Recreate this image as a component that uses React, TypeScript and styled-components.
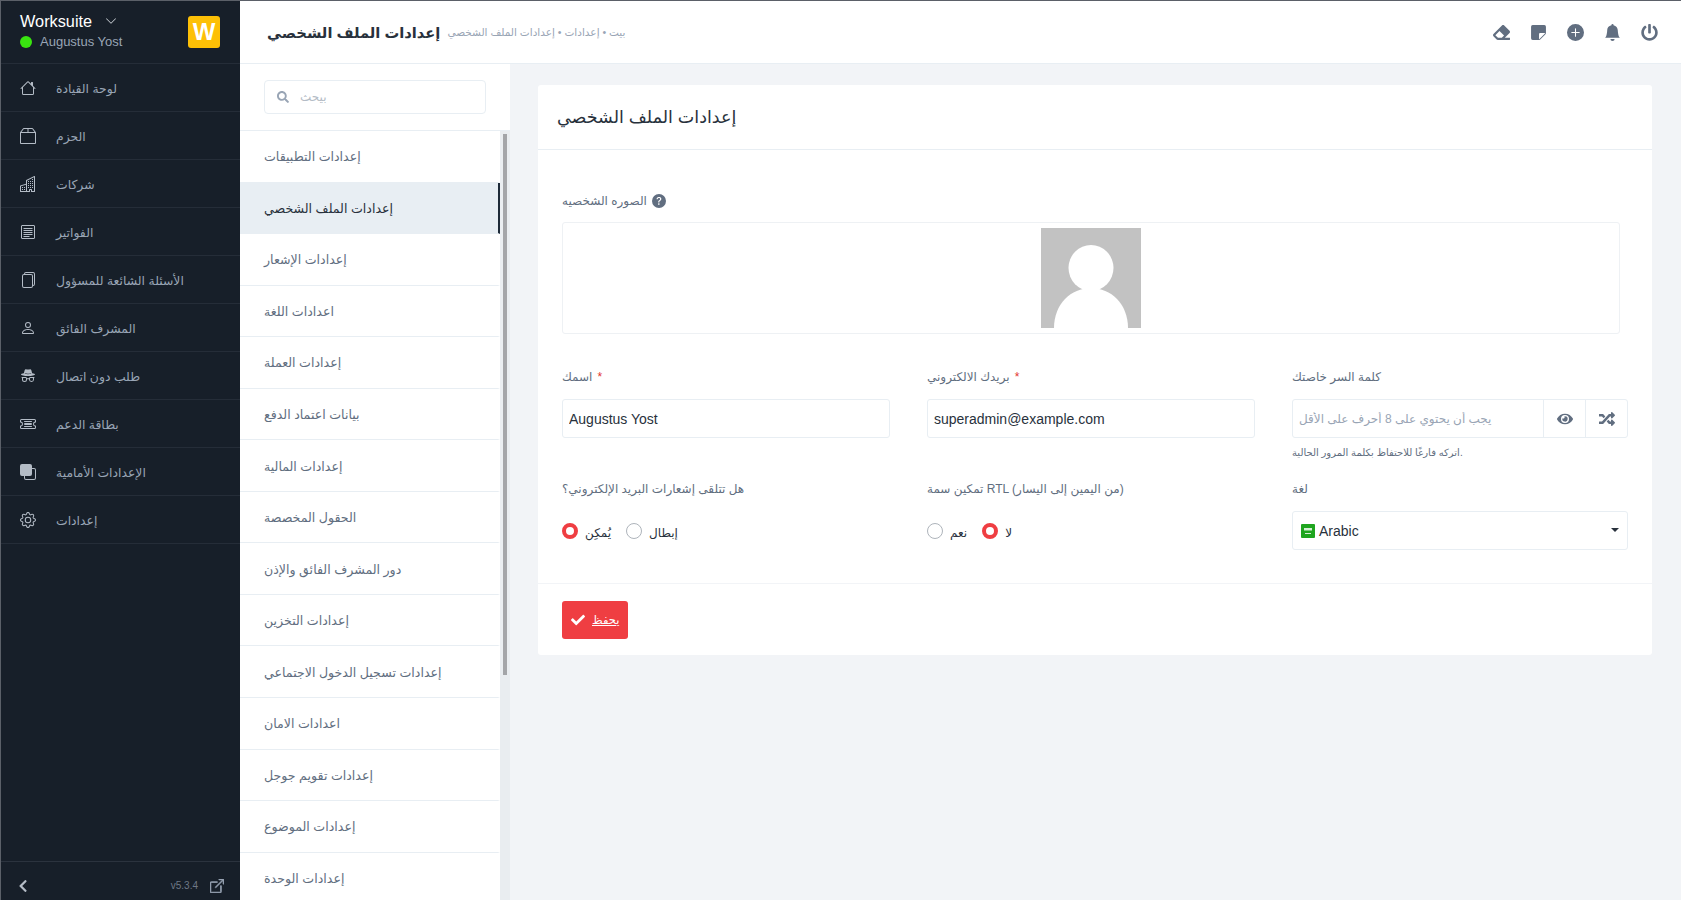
import React from "react";
import styled, { createGlobalStyle } from "styled-components";
import {
	BsBellFill,
	BsBox2,
	BsBoxArrowUpRight,
	BsBuildings,
	BsChevronDown,
	BsFiles,
	BsFront,
	BsGear,
	BsHouse,
	BsIncognito,
	BsPerson,
	BsPlusCircleFill,
	BsQuestionCircleFill,
	BsStickyFill,
	BsTicketDetailed,
} from "react-icons/bs";
import { FaCheck, FaChevronLeft, FaEraser, FaEye, FaPowerOff, FaRandom, FaSearch } from "react-icons/fa";

const InvoiceIcon: React.FC = () => (
	<svg width="16" height="16" viewBox="0 0 16 16" fill="none" stroke="currentColor" strokeWidth="1">
		<rect x="1.5" y="1.5" width="13" height="13" rx="0.5" />
		<path d="M3.5 4.5h9M3.5 6.5h9M3.5 8.5h9M3.5 10.5h9M3.5 12.5h6" />
	</svg>
);

const menuItems = [
	{ label: "لوحة القيادة", icon: <BsHouse /> },
	{ label: "الحزم", icon: <BsBox2 /> },
	{ label: "شركات", icon: <BsBuildings /> },
	{ label: "الفواتير", icon: <InvoiceIcon /> },
	{ label: "الأسئلة الشائعة للمسؤول", icon: <BsFiles /> },
	{ label: "المشرف الفائق", icon: <BsPerson /> },
	{ label: "طلب دون اتصال", icon: <BsIncognito /> },
	{ label: "بطاقة الدعم", icon: <BsTicketDetailed /> },
	{ label: "الإعدادات الأمامية", icon: <BsFront /> },
	{ label: "إعدادات", icon: <BsGear /> },
];

const settingsItems = [
	"إعدادات التطبيقات",
	"إعدادات الملف الشخصي",
	"إعدادات الإشعار",
	"اعدادات اللغة",
	"إعدادات العملة",
	"بيانات اعتماد الدفع",
	"إعدادات المالية",
	"الحقول المخصصة",
	"دور المشرف الفائق والإذن",
	"إعدادات التخزين",
	"إعدادات تسجيل الدخول الاجتماعي",
	"اعدادات الامان",
	"إعدادات تقويم جوجل",
	"إعدادات الموضوع",
	"إعدادات الوحدة",
];

const App: React.FC = () => {
	return (
		<>
			<GlobalStyle />
			<Page>
				<Sidebar>
					<BrandRow>
						<div>
							<BrandName>
								Worksuite <BsChevronDown />
							</BrandName>
							<BrandUser>
								<OnlineDot />
								Augustus Yost
							</BrandUser>
						</div>
						<Logo>W</Logo>
					</BrandRow>
					<Menu>
						{menuItems.map((item) => (
							<MenuItem key={item.label}>
								<MenuIcon>{item.icon}</MenuIcon>
								<MenuLabel>{item.label}</MenuLabel>
							</MenuItem>
						))}
					</Menu>
					<SidebarFooter>
						<FaChevronLeft />
						<VersionGroup>
							v5.3.4
							<BsBoxArrowUpRight />
						</VersionGroup>
					</SidebarFooter>
				</Sidebar>
				<Main>
					<TopBar>
						<TitleGroup>
							<PageTitle>إعدادات الملف الشخصي</PageTitle>
							<Breadcrumb>بيت • إعدادات • إعدادات الملف الشخصي</Breadcrumb>
						</TitleGroup>
						<TopIcons>
							<FaEraser />
							<BsStickyFill />
							<BsPlusCircleFill />
							<BsBellFill />
							<FaPowerOff />
						</TopIcons>
					</TopBar>
					<Content>
						<SettingsNav>
							<SearchSection>
								<SearchBox>
									<FaSearch />
									<SearchInput placeholder="بيحث" />
								</SearchBox>
							</SearchSection>
							<SettingsScroller>
								<SettingsList>
									{settingsItems.map((label, index) => (
										<SettingsItem key={label} $active={index === 1}>
											{label}
										</SettingsItem>
									))}
								</SettingsList>
								<ScrollTrack>
									<ScrollThumb />
								</ScrollTrack>
							</SettingsScroller>
						</SettingsNav>
						<Workspace>
							<Card>
								<CardHeader>إعدادات الملف الشخصي</CardHeader>
								<CardBody>
									<Label>
										الصوره الشخصيه <BsQuestionCircleFill />
									</Label>
									<DropBox>
										<Avatar viewBox="0 0 100 100">
											<rect width="100" height="100" fill="#c2c2c2" />
											<ellipse cx="50" cy="40" rx="22.5" ry="23" fill="#fff" />
											<path d="M13 100C13 76 30 60 50 60s37 16 37 40z" fill="#fff" />
										</Avatar>
									</DropBox>
									<FormGrid>
										<Field>
											<Label>
												اسمك <Required>*</Required>
											</Label>
											<TextInput defaultValue="Augustus Yost" />
										</Field>
										<Field>
											<Label>
												بريدك الالكتروني <Required>*</Required>
											</Label>
											<TextInput defaultValue="superadmin@example.com" />
										</Field>
										<Field>
											<Label>كلمة السر خاصتك</Label>
											<InputGroup>
												<GroupInput placeholder="يجب أن يحتوي على 8 أحرف على الأقل" />
												<GroupButton>
													<FaEye />
												</GroupButton>
												<GroupButton>
													<FaRandom />
												</GroupButton>
											</InputGroup>
											<Hint>اتركه فارغًا للاحتفاظ بكلمة المرور الحالية.</Hint>
										</Field>
										<Field>
											<Label>هل تتلقى إشعارات البريد الإلكتروني؟</Label>
											<RadioRow>
												<RadioDot $checked />
												<RadioText>يُمكِن</RadioText>
												<RadioDot />
												<RadioText>إبطال</RadioText>
											</RadioRow>
										</Field>
										<Field>
											<Label>تمكين سمة RTL (من اليمين إلى اليسار)</Label>
											<RadioRow>
												<RadioDot />
												<RadioText>نعم</RadioText>
												<RadioDot $checked />
												<RadioText>لا</RadioText>
											</RadioRow>
										</Field>
										<Field>
											<Label>لغة</Label>
											<SelectBox>
												<Flag viewBox="0 0 14 14">
													<rect width="14" height="14" rx="1" fill="#1fa51f" />
													<rect x="3" y="4" width="8" height="2.5" fill="#d6efd6" />
													<rect x="4" y="9" width="6" height="1" fill="#d6efd6" />
												</Flag>
												Arabic
												<Caret />
											</SelectBox>
										</Field>
									</FormGrid>
								</CardBody>
								<CardFooter>
									<SaveButton>
										<FaCheck />
										<u>يحفظ</u>
									</SaveButton>
								</CardFooter>
							</Card>
						</Workspace>
					</Content>
				</Main>
			</Page>
		</>
	);
};

export default App;

const arabicStack = `"Liberation Sans", "DejaVu Sans", sans-serif`;

const GlobalStyle = createGlobalStyle`
	* {
		box-sizing: border-box;
	}
	html, body {
		margin: 0;
		height: 100%;
	}
	body {
		font-family: ${arabicStack};
		font-size: 13px;
		overflow: hidden;
	}
`;

const Page = styled.div`
	display: flex;
	height: 900px;
	width: 1681px;
	overflow: hidden;
	border-top: 1px solid #5b6068;
	border-left: 1px solid #5b6068;
`;

const Sidebar = styled.aside`
	display: flex;
	flex-direction: column;
	flex: 0 0 239px;
	background: #171f29;
`;

const BrandRow = styled.div`
	display: flex;
	align-items: center;
	justify-content: space-between;
	flex: 0 0 63px;
	padding: 0 20px 4px 19px;
	border-bottom: 1px solid #252d38;
`;

const BrandName = styled.div`
	display: flex;
	align-items: center;
	gap: 13px;
	color: #fff;
	font-size: 16.3px;
	line-height: 20px;

	svg {
		width: 12px;
		height: 12px;
		color: #d0d5db;
	}
`;

const BrandUser = styled.div`
	display: flex;
	align-items: center;
	gap: 8px;
	margin-top: 3px;
	color: #99a5b5;
	font-size: 13px;
	line-height: 16px;
`;

const OnlineDot = styled.span`
	width: 12px;
	height: 12px;
	border-radius: 50%;
	background: #39e510;
`;

const Logo = styled.div`
	display: flex;
	align-items: center;
	justify-content: center;
	width: 32px;
	height: 32px;
	margin-top: 4px;
	border-radius: 3px;
	background: #fdc006;
	color: #fff;
	font-size: 24px;
	font-weight: 700;
`;

const Menu = styled.nav`
	flex: 1;
`;

const MenuItem = styled.div`
	display: flex;
	align-items: center;
	height: 48px;
	padding-left: 19px;
	border-bottom: 1px solid #252d38;
	color: #99a5b5;
	font-size: 12.4px;
`;

const MenuIcon = styled.span`
	display: flex;
	width: 36px;
	color: #b4bcc6;

	svg {
		width: 16px;
		height: 16px;
	}
`;

const MenuLabel = styled.span`
	padding-top: 2px;
`;

const SidebarFooter = styled.div`
	display: flex;
	align-items: center;
	justify-content: space-between;
	flex: 0 0 39px;
	padding: 9px 16px 0 15px;
	border-top: 1px solid #2b333e;
	color: #b4bcc6;

	svg {
		width: 14px;
		height: 14px;
	}
`;

const VersionGroup = styled.div`
	display: flex;
	align-items: center;
	gap: 12px;
	color: #6e7887;
	font-size: 10px;

	svg {
		color: #99a5b5;
		stroke: currentColor;
		stroke-width: 0.8;
	}
`;

const Main = styled.div`
	display: flex;
	flex-direction: column;
	flex: 1;
	min-width: 0;
`;

const TopBar = styled.header`
	display: flex;
	align-items: center;
	justify-content: space-between;
	flex: 0 0 63px;
	padding: 0 23px 0 27px;
	border-bottom: 1px solid #e8eef3;
	background: #fff;
`;

const TitleGroup = styled.div`
	display: flex;
	align-items: center;
	gap: 7px;
`;

const PageTitle = styled.h1`
	margin: 0;
	color: #28313c;
	font-size: 14.7px;
	font-weight: 700;
`;

const Breadcrumb = styled.span`
	color: #99a5b5;
	font-size: 10.5px;
`;

const TopIcons = styled.div`
	display: flex;
	align-items: center;
	gap: 20px;
	color: #616e80;

	svg {
		width: 17px;
		height: 17px;
	}
`;

const Content = styled.div`
	display: flex;
	flex: 1;
	min-height: 0;
`;

const SettingsNav = styled.div`
	display: flex;
	flex-direction: column;
	flex: 0 0 270px;
	background: #fff;
`;

const SearchSection = styled.div`
	flex: 0 0 67px;
	padding: 16px 24px 0;
	border-bottom: 1px solid #e8eef3;
`;

const SearchBox = styled.div`
	display: flex;
	align-items: center;
	gap: 9px;
	height: 34px;
	padding: 0 12px;
	border: 1px solid #e8eef3;
	border-radius: 4px;

	svg {
		width: 12px;
		height: 12px;
		color: #99a5b5;
	}
`;

const SearchInput = styled.input`
	flex: 1;
	min-width: 0;
	border: 0;
	outline: 0;
	font-family: ${arabicStack};
	font-size: 12px;

	&::placeholder {
		color: #b4bcc6;
	}
`;

const SettingsScroller = styled.div`
	display: flex;
	flex: 0 0 758px;
`;

const SettingsList = styled.div`
	flex: 0 0 260px;
	overflow: hidden;
`;

const SettingsItem = styled.div<{ $active?: boolean }>`
	display: flex;
	align-items: center;
	height: 51.55px;
	padding: 1px 0 0 24px;
	border-bottom: 1px solid #e8eef3;
	border-right: 2px solid ${(p) => (p.$active ? "#1d2a38" : "transparent")};
	background: ${(p) => (p.$active ? "#e8eef3" : "#fff")};
	color: ${(p) => (p.$active ? "#28313c" : "#616e80")};
	font-size: 12.6px;
`;

const ScrollTrack = styled.div`
	flex: 0 0 10px;
	padding: 3px 3px 0;
	background: #e9edf0;
`;

const ScrollThumb = styled.div`
	height: 541px;
	background: #a3a5a8;
`;

const Workspace = styled.main`
	flex: 1;
	padding: 21px 29px 0 28px;
	background: #f2f4f7;
`;

const Card = styled.section`
	height: 570px;
	border-radius: 3px;
	background: #fff;
`;

const CardHeader = styled.h2`
	display: flex;
	align-items: center;
	height: 65px;
	margin: 0;
	padding: 0 19px;
	border-bottom: 1px solid #e8eef3;
	color: #28313c;
	font-size: 17.5px;
	font-weight: 400;
`;

const CardBody = styled.div`
	height: 434px;
	padding: 41px 24px 0;
	border-bottom: 1px solid #f2f4f7;
`;

const Label = styled.label`
	display: flex;
	align-items: center;
	gap: 5px;
	height: 20px;
	color: #616e80;
	font-size: 12px;

	svg {
		width: 14px;
		height: 14px;
		color: #616e80;
	}
`;

const Required = styled.span`
	color: #e2342f;
`;

const DropBox = styled.div`
	display: flex;
	justify-content: center;
	align-items: center;
	width: 1058px;
	height: 112px;
	margin: 11px 0 33px;
	border: 1px solid #eef1f4;
	border-radius: 3px;
`;

const Avatar = styled.svg`
	width: 100px;
	height: 100px;
`;

const FormGrid = styled.div`
	display: grid;
	grid-template-columns: 328px 328px 336px;
	grid-template-rows: 112px auto;
	column-gap: 37px;
`;

const Field = styled.div`
	display: flex;
	flex-direction: column;
`;

const inputBox = `
	height: 39px;
	margin-top: 12px;
	border: 1px solid #e8eef3;
	border-radius: 3px;
`;

const TextInput = styled.input`
	${inputBox}
	width: 100%;
	padding: 0 6px;
	outline: 0;
	color: #28313c;
	font-family: "Liberation Sans", sans-serif;
	font-size: 14px;
`;

const InputGroup = styled.div`
	${inputBox}
	display: flex;
`;

const GroupInput = styled.input`
	flex: 1;
	min-width: 0;
	padding: 0 6px;
	border: 0;
	outline: 0;
	background: transparent;
	font-family: ${arabicStack};
	font-size: 12px;

	&::placeholder {
		color: #99a5b5;
	}
`;

const GroupButton = styled.span`
	display: flex;
	align-items: center;
	justify-content: center;
	width: 42px;
	border-left: 1px solid #e8eef3;
	color: #616e80;

	svg {
		width: 16px;
		height: 16px;
	}
`;

const Hint = styled.small`
	margin-top: 9px;
	color: #616e80;
	font-size: 10px;
`;

const RadioRow = styled.div`
	display: flex;
	align-items: center;
	height: 20px;
	margin-top: 22px;
`;

const RadioDot = styled.span<{ $checked?: boolean }>`
	flex: none;
	width: 16px;
	height: 16px;
	border-radius: 50%;
	background: #fff;
	border: ${(p) => (p.$checked ? "4.5px solid #ef3e42" : "1px solid #aeb4bb")};
`;

const RadioText = styled.span`
	margin: 3px 15px 0 7px;
	color: #28313c;
	font-size: 12px;
`;

const SelectBox = styled.div`
	${inputBox}
	position: relative;
	display: flex;
	align-items: center;
	gap: 4px;
	padding: 0 8px;
	color: #28313c;
	font-size: 14px;
`;

const Flag = styled.svg`
	width: 14px;
	height: 14px;
`;

const Caret = styled.span`
	position: absolute;
	right: 8px;
	top: 16px;
	border-top: 4px solid #28313c;
	border-left: 4px solid transparent;
	border-right: 4px solid transparent;
`;

const CardFooter = styled.div`
	padding: 17px 24px;
`;

const SaveButton = styled.button`
	display: flex;
	align-items: center;
	gap: 7px;
	height: 38px;
	padding: 0 9px;
	border: 0;
	border-radius: 3px;
	background: #ef3e42;
	color: #fff;
	font-family: ${arabicStack};
	font-size: 11.5px;

	svg {
		width: 14px;
		height: 14px;
	}
`;
